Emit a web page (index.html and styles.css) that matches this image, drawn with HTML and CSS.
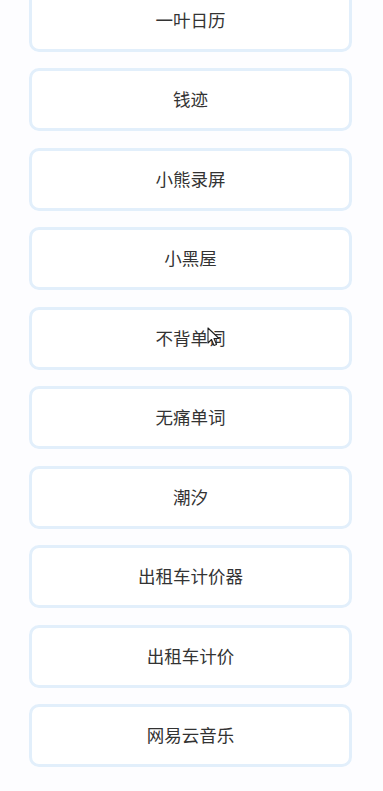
FILE: index.html
```html
<!DOCTYPE html>
<html lang="zh">
<head>
<meta charset="utf-8">
<title>应用列表</title>
<link rel="stylesheet" href="styles.css">
</head>
<body>
<main class="list">
  <div class="card">一叶日历</div>
  <div class="card">钱迹</div>
  <div class="card">小熊录屏</div>
  <div class="card">小黑屋</div>
  <div class="card">不背单词</div>
  <div class="card">无痛单词</div>
  <div class="card">潮汐</div>
  <div class="card">出租车计价器</div>
  <div class="card">出租车计价</div>
  <div class="card">网易云音乐</div>
</main>
<svg class="cursor" width="13" height="20" viewBox="0 0 13 20" aria-hidden="true">
  <path d="M1 1 L1 16 L4.5 12.5 L7 18.5 L9.5 17.5 L7 11.5 L12 11.5 Z" fill="#fff" stroke="#222" stroke-width="1.1" stroke-linejoin="round"/>
</svg>
</body>
</html>
```
FILE: styles.css
```css
html, body {
  margin: 0;
  padding: 0;
  background: #fdfdff;
  overflow: hidden;
}
body {
  position: relative;
  height: 791px;
  font-family: "Noto Sans CJK SC", "Noto Sans", sans-serif;
}
.list {
  display: flex;
  flex-direction: column;
  gap: 16.5px;
  margin-top: -11.5px;
  padding-left: 29px;
}
.card {
  box-sizing: border-box;
  width: 323px;
  height: 63px;
  padding-bottom: 2px;
  border: 3px solid #e2effb;
  border-radius: 10px;
  background: #ffffff;
  display: flex;
  align-items: center;
  justify-content: center;
  font-size: 17.5px;
  color: #333333;
}
.cursor {
  position: absolute;
  left: 207px;
  top: 327px;
}
```
